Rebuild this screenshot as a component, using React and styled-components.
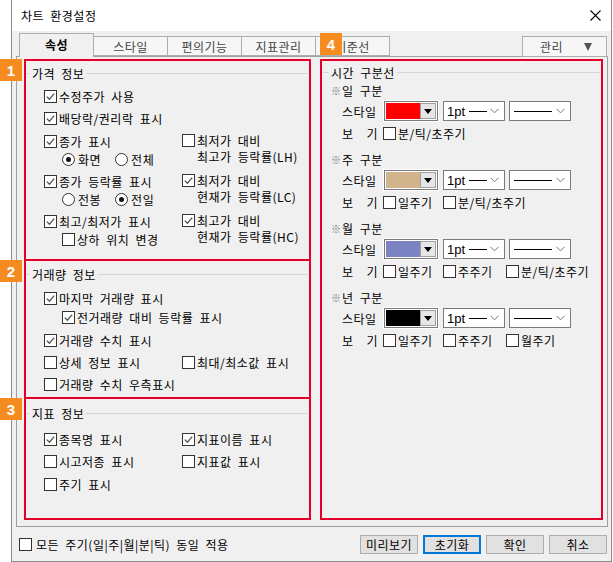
import React from "react";
import styled, { createGlobalStyle } from "styled-components";

const RED = "#e4002b";
const ORANGE = "#f68b1f";

const GlobalStyle = createGlobalStyle`
  html, body {
    margin: 0;
    padding: 0;
    background: #fff;
  }
  body {
    font-family: "Noto Sans CJK KR", "Noto Sans", sans-serif;
    font-size: 12px;
    letter-spacing: 0.5px;
    word-spacing: 3px;
    color: #000;
  }
  * { box-sizing: border-box; }
`;

const Root = styled.div`
  position: relative;
  width: 613px;
  height: 562px;
  overflow: hidden;
`;

const Window = styled.div`
  margin-left: 11px;
  width: 601px;
  height: 562px;
  border: 1px solid #8c8c8c;
  border-top: none;
  background: #f0f0f0;
  display: flex;
  flex-direction: column;
`;

const TitleBar = styled.div`
  height: 31px;
  flex: none;
  background: #fff;
  display: flex;
  align-items: center;
  justify-content: space-between;
  padding: 0 10px 0 9px;
  font-size: 12px;
`;

const Body = styled.div`
  flex: 1;
  display: flex;
  flex-direction: column;
  padding: 2px 3px 0 4px;
`;

const TabBar = styled.div`
  height: 23px;
  display: flex;
  align-items: flex-end;
  padding-left: 3px;
  position: relative;
  z-index: 1;
`;

const Tab = styled.div`
  width: 75px;
  height: ${(p) => (p.$active ? 24 : 20)}px;
  margin-bottom: ${(p) => (p.$active ? -1 : 0)}px;
  margin-left: -1px;
  &:first-child { margin-left: 0; }
  border: 1px solid #adadad;
  border-bottom: ${(p) => (p.$active ? "none" : "1px solid #adadad")};
  background: ${(p) => (p.$active ? "#f0f0f0" : "#f6f6f6")};
  color: ${(p) => (p.$active ? "#000" : "#444")};
  font-weight: ${(p) => (p.$active ? 700 : 400)};
  display: flex;
  align-items: center;
  justify-content: center;
  padding-bottom: ${(p) => (p.$active ? 2 : 0)}px;
`;

const ManageButton = styled.div`
  margin-left: auto;
  margin-right: 1px;
  margin-bottom: -1px;
  width: 85px;
  height: 21px;
  border: 1px solid #adadad;
  background: #f6f6f6;
  color: #444;
  display: flex;
  align-items: center;
  justify-content: space-between;
  padding: 0 14px 0 17px;
`;

const DownTriangle = styled.span`
  width: 0;
  height: 0;
  border-left: 4px solid transparent;
  border-right: 4px solid transparent;
  border-top: 8px solid #555;
`;

const Panel = styled.div`
  height: 471px;
  flex: none;
  border: 1px solid #a0a0a0;
  display: flex;
  gap: 9px;
  padding: 2px 4px 6px 7px;
`;

const LeftColumn = styled.div`
  width: 287px;
  border: 2px solid ${RED};
  display: flex;
  flex-direction: column;
`;

const RightColumn = styled.div`
  flex: 1;
  border: 2px solid ${RED};
  padding-top: 4px;
`;

const Section = styled.div`
  height: ${(p) => (p.$h ? `${p.$h}px` : "auto")};
  flex: ${(p) => (p.$h ? "none" : 1)};
  padding-top: ${(p) => p.$pt}px;
  border-top: ${(p) => (p.$first ? "none" : `2px solid ${RED}`)};
`;

const GroupTitle = styled.div`
  display: flex;
  align-items: center;
  height: ${(p) => p.$h || 16}px;
  padding-left: 1px;
  gap: 2px;
  &::before {
    content: "";
    width: ${(p) => p.$lead || 3}px;
    height: 1px;
    background: #d5d5d5;
  }
  &::after {
    content: "";
    flex: 1;
    height: 1px;
    background: #d5d5d5;
    margin-right: 1px;
  }
`;

const List = styled.div`
  padding-left: 18px;
  margin-top: ${(p) => p.$mt || 0}px;
`;

const CheckRow = styled.div`
  display: flex;
  align-items: ${(p) => (p.$top ? "flex-start" : "center")};
  height: ${(p) => (p.$h ? `${p.$h}px` : "auto")};
  gap: ${(p) => p.$gap || 2}px;
  padding-left: ${(p) => p.$indent || 0}px;
  padding-top: ${(p) => p.$pt || 0}px;
  margin-top: ${(p) => p.$mt || 0}px;
  white-space: nowrap;
`;

const Box = styled.span`
  width: 13px;
  height: 13px;
  flex: none;
  border: 1px solid #333;
  background: #fff;
  display: flex;
  align-items: center;
  justify-content: center;
  margin-top: ${(p) => p.$mt || 0}px;
`;

const MultiLabel = styled.div`
  line-height: 16px;
`;

const Pair = styled.div`
  display: grid;
  grid-template-columns: 138px 1fr;
  height: ${(p) => p.$h || 40}px;
  margin-top: ${(p) => p.$mt || 0}px;
`;

const SubLine = styled.div`
  display: flex;
  align-items: center;
  height: 16px;
  padding-left: 18px;
  gap: 14px;
`;

const RadioItem = styled.div`
  display: flex;
  align-items: center;
  gap: 3px;
`;

const RadioCircle = styled.span`
  width: 13px;
  height: 13px;
  border-radius: 50%;
  border: 1px solid #333;
  background: #fff;
  display: flex;
  align-items: center;
  justify-content: center;
  &::after {
    content: "";
    width: 5px;
    height: 5px;
    border-radius: 50%;
    background: ${(p) => (p.$on ? "#111" : "transparent")};
  }
`;

const Header = styled.div`
  height: 20px;
  display: flex;
  align-items: center;
  padding-left: 9px;
`;

const Mark = styled.span`
  color: #777;
  font-size: 10px;
  width: 11px;
`;

const ControlRow = styled.div`
  height: 22px;
  display: flex;
  align-items: center;
  padding-left: 20px;
  white-space: nowrap;
`;

const RowLabel = styled.span`
  width: ${(p) => p.$w}px;
  flex: none;
  display: flex;
  justify-content: space-between;
  margin-right: ${(p) => p.$mr || 0}px;
`;

const Combo = styled.div`
  width: 54px;
  height: 20px;
  flex: none;
  border: 1px solid #7a7a7a;
  background: #fff;
  padding: 1px;
  display: flex;
  box-shadow: 0 0 0 1px #fff;
`;

const Swatch = styled.span`
  flex: 1;
  background: ${(p) => p.$color};
`;

const DropButton = styled.span`
  width: 16px;
  border: 1px solid #a0a0a0;
  background: #e6e6e6;
  display: flex;
  align-items: center;
  justify-content: center;
`;

const SmallTri = styled.span`
  width: 0;
  height: 0;
  border-left: 4px solid transparent;
  border-right: 4px solid transparent;
  border-top: 5px solid #000;
`;

const Select = styled.div`
  width: 62px;
  height: 20px;
  flex: none;
  margin-left: ${(p) => p.$ml}px;
  border: 1px solid #7a7a7a;
  background: #fff;
  display: flex;
  align-items: center;
  padding: 0 5px 0 3px;
  font-family: "Liberation Sans", "Noto Sans", sans-serif;
  font-size: 13px;
  letter-spacing: 0;
`;

const LineSample = styled.span`
  width: ${(p) => p.$w}px;
  height: 1px;
  background: #000;
  margin-left: ${(p) => p.$ml}px;
`;

const ViewItem = styled.div`
  width: ${(p) => (p.$w ? `${p.$w}px` : "auto")};
  flex: none;
  display: flex;
  align-items: center;
  gap: 2px;
  white-space: nowrap;
`;

const Footer = styled.div`
  flex: 1;
  display: flex;
  align-items: center;
  padding-left: 3px;
`;

const Buttons = styled.div`
  margin-left: auto;
  margin-right: 1px;
  display: flex;
  gap: 5px;
`;

const Button = styled.div`
  width: 58px;
  height: 19px;
  border: ${(p) => (p.$primary ? "2px solid #0078d7" : "1px solid #adadad")};
  background: #e1e1e1;
  display: flex;
  align-items: center;
  justify-content: center;
`;

const Badge = styled.div`
  position: absolute;
  left: ${(p) => p.$x}px;
  top: ${(p) => p.$y}px;
  width: 22px;
  height: 22px;
  background: ${ORANGE};
  color: #fff;
  font-family: "Liberation Sans", Arial, sans-serif;
  font-weight: 700;
  font-size: 15px;
  letter-spacing: 0;
  display: flex;
  align-items: center;
  justify-content: center;
  z-index: 5;
`;

const CheckMark = () => (
  <svg width="9" height="9" viewBox="0 0 9 9">
    <polyline points="0.8,4.6 3.4,7.2 8.2,1.6" fill="none" stroke="#555" strokeWidth="1.3" />
  </svg>
);

const Check = ({ on, mt }) => <Box $mt={mt}>{on && <CheckMark />}</Box>;

const Chevron = () => (
  <svg width="9" height="6" viewBox="0 0 9 6" style={{ marginLeft: "auto" }}>
    <polyline points="0.5,0.8 4.5,4.8 8.5,0.8" fill="none" stroke="#777" strokeWidth="1" />
  </svg>
);

const CloseIcon = () => (
  <svg width="11" height="11" viewBox="0 0 11 11">
    <line x1="0.5" y1="0.5" x2="10.5" y2="10.5" stroke="#000" strokeWidth="1.1" />
    <line x1="10.5" y1="0.5" x2="0.5" y2="10.5" stroke="#000" strokeWidth="1.1" />
  </svg>
);

const Radio = ({ on, label }) => (
  <RadioItem>
    <RadioCircle $on={on} />
    <span>{label}</span>
  </RadioItem>
);

const StyleRow = ({ color }) => (
  <ControlRow>
    <RowLabel $w={42}>스타일</RowLabel>
    <Combo>
      <Swatch $color={color} />
      <DropButton>
        <SmallTri />
      </DropButton>
    </Combo>
    <Select $ml={5}>
      <span>1pt</span>
      <LineSample $w={18} $ml={4} />
      <Chevron />
    </Select>
    <Select $ml={4}>
      <LineSample $w={38} $ml={1} />
      <Chevron />
    </Select>
  </ControlRow>
);

const ViewRow = ({ items }) => (
  <ControlRow>
    <RowLabel $w={36} $mr={5}>
      <span>보</span>
      <span>기</span>
    </RowLabel>
    {items.map((it, i) => (
      <ViewItem key={it} $w={i === 0 ? 60 : i === 1 ? 63 : 0}>
        <Check />
        <span>{it}</span>
      </ViewItem>
    ))}
  </ControlRow>
);

const dividers = [
  { name: "일 구분", color: "#ff0000", items: ["분/틱/초주기"] },
  { name: "주 구분", color: "#d2b48c", items: ["일주기", "분/틱/초주기"] },
  { name: "월 구분", color: "#7b83c2", items: ["일주기", "주주기", "분/틱/초주기"] },
  { name: "년 구분", color: "#000000", items: ["일주기", "주주기", "월주기"] },
];

const Divider = styled.div`
  margin-bottom: 5px;
`;

export default function App() {
  return (
    <Root>
      <GlobalStyle />
      <Window>
        <TitleBar>
          <span>차트 환경설정</span>
          <CloseIcon />
        </TitleBar>
        <Body>
          <TabBar>
            <Tab $active>속성</Tab>
            <Tab>스타일</Tab>
            <Tab>편의기능</Tab>
            <Tab>지표관리</Tab>
            <Tab>기준선</Tab>
            <ManageButton>
              <span>관리</span>
              <DownTriangle />
            </ManageButton>
          </TabBar>
          <Panel>
            <LeftColumn>
              <Section $first $h={198} $pt={4}>
                <GroupTitle>가격 정보</GroupTitle>
                <List $mt={4}>
                  <CheckRow $h={22}>
                    <Check on />
                    <span>수정주가 사용</span>
                  </CheckRow>
                  <CheckRow $h={22}>
                    <Check on />
                    <span>배당락/권리락 표시</span>
                  </CheckRow>
                  <Pair $mt={2}>
                    <div>
                      <CheckRow $h={20}>
                        <Check on />
                        <span>종가 표시</span>
                      </CheckRow>
                      <SubLine>
                        <Radio on label="화면" />
                        <Radio label="전체" />
                      </SubLine>
                    </div>
                    <CheckRow $top $pt={2}>
                      <Check mt={1} />
                      <MultiLabel>
                        최저가 대비
                        <br />
                        최고가 등락률(LH)
                      </MultiLabel>
                    </CheckRow>
                  </Pair>
                  <Pair>
                    <div>
                      <CheckRow $h={20}>
                        <Check on />
                        <span>종가 등락률 표시</span>
                      </CheckRow>
                      <SubLine>
                        <Radio label="전봉" />
                        <Radio on label="전일" />
                      </SubLine>
                    </div>
                    <CheckRow $top $pt={2}>
                      <Check on mt={1} />
                      <MultiLabel>
                        최저가 대비
                        <br />
                        현재가 등락률(LC)
                      </MultiLabel>
                    </CheckRow>
                  </Pair>
                  <Pair>
                    <div>
                      <CheckRow $h={20}>
                        <Check on />
                        <span>최고/최저가 표시</span>
                      </CheckRow>
                      <CheckRow $h={16} $indent={18}>
                        <Check />
                        <span>상하 위치 변경</span>
                      </CheckRow>
                    </div>
                    <CheckRow $top $pt={2}>
                      <Check on mt={1} />
                      <MultiLabel>
                        최고가 대비
                        <br />
                        현재가 등락률(HC)
                      </MultiLabel>
                    </CheckRow>
                  </Pair>
                </List>
              </Section>

              <Section $h={138} $pt={5}>
                <GroupTitle>거래량 정보</GroupTitle>
                <List $mt={5}>
                  <CheckRow $h={22}>
                    <Check on />
                    <span>마지막 거래량 표시</span>
                  </CheckRow>
                  <CheckRow $h={17} $indent={18}>
                    <Check on />
                    <span>전거래량 대비 등락률 표시</span>
                  </CheckRow>
                  <CheckRow $h={22} $mt={3}>
                    <Check on />
                    <span>거래량 수치 표시</span>
                  </CheckRow>
                  <Pair $h={22}>
                    <CheckRow $h={22}>
                      <Check />
                      <span>상세 정보 표시</span>
                    </CheckRow>
                    <CheckRow $h={22}>
                      <Check />
                      <span>최대/최소값 표시</span>
                    </CheckRow>
                  </Pair>
                  <CheckRow $h={22}>
                    <Check />
                    <span>거래량 수치 우측표시</span>
                  </CheckRow>
                </List>
              </Section>

              <Section $pt={6}>
                <GroupTitle>지표 정보</GroupTitle>
                <List $mt={7}>
                  <Pair $h={22}>
                    <CheckRow $h={22}>
                      <Check on />
                      <span>종목명 표시</span>
                    </CheckRow>
                    <CheckRow $h={22}>
                      <Check on />
                      <span>지표이름 표시</span>
                    </CheckRow>
                  </Pair>
                  <Pair $h={22}>
                    <CheckRow $h={22}>
                      <Check />
                      <span>시고저종 표시</span>
                    </CheckRow>
                    <CheckRow $h={22}>
                      <Check />
                      <span>지표값 표시</span>
                    </CheckRow>
                  </Pair>
                  <CheckRow $h={22} $mt={1}>
                    <Check />
                    <span>주기 표시</span>
                  </CheckRow>
                </List>
              </Section>
            </LeftColumn>

            <RightColumn>
              <GroupTitle $h={15} $lead={6}>시간 구분선</GroupTitle>
              {dividers.map((d) => (
                <Divider key={d.name}>
                  <Header>
                    <Mark>※</Mark>
                    <span>{d.name}</span>
                  </Header>
                  <StyleRow color={d.color} />
                  <ViewRow items={d.items} />
                </Divider>
              ))}
            </RightColumn>
          </Panel>
          <Footer>
            <CheckRow $h={20} $gap={4}>
              <Check />
              <span>모든 주기(일|주|월|분|틱) 동일 적용</span>
            </CheckRow>
            <Buttons>
              <Button>미리보기</Button>
              <Button $primary>초기화</Button>
              <Button>확인</Button>
              <Button>취소</Button>
            </Buttons>
          </Footer>
        </Body>
      </Window>
      <Badge $x={0} $y={59}>1</Badge>
      <Badge $x={0} $y={260}>2</Badge>
      <Badge $x={0} $y={398}>3</Badge>
      <Badge $x={320} $y={33}>4</Badge>
    </Root>
  );
}
